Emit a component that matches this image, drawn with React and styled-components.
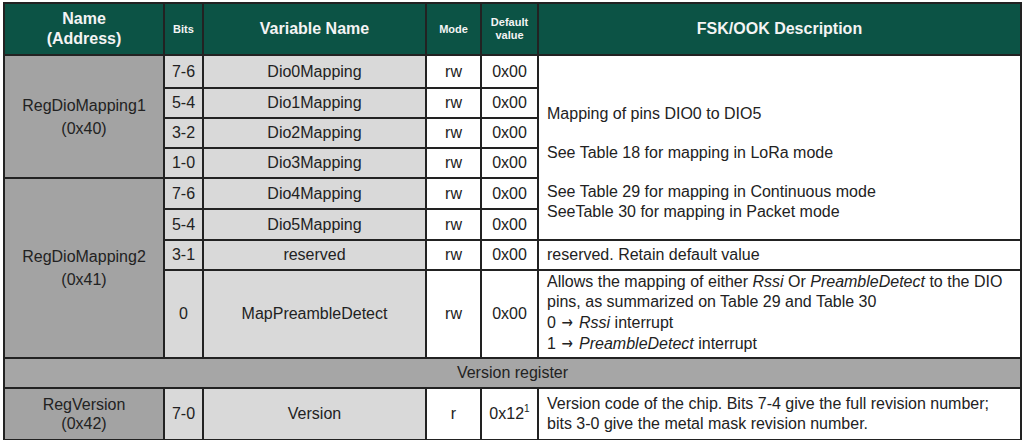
import React from "react";
import styled, { createGlobalStyle } from "styled-components";

const GlobalStyle = createGlobalStyle`
  body {
    margin: 0;
    background: #fff;
    font-family: "Liberation Sans", Arial, sans-serif;
    color: #222;
  }
`;

const Table = styled.table`
  margin: 2px 0 0 3px;
  width: 1017px;
  border-collapse: collapse;
  table-layout: fixed;
  font-size: 16px;
`;

const Col = styled.col`
  width: ${(p) => p.$w}px;
`;

const Row = styled.tr`
  height: ${(p) => p.$h}px;
`;

const Cell = styled.td`
  border: 2px solid #222;
  padding: 0;
  text-align: center;
  vertical-align: middle;
  line-height: 20px;
  background: #fff;
`;

const HeadCell = styled.th`
  border: 2px solid #222;
  padding: 0;
  background: #0c5345;
  color: #f4f4f4;
  font-weight: bold;
  font-size: ${(p) => (p.$small ? "11px" : "16px")};
  line-height: ${(p) => (p.$small ? "13px" : "20px")};
  text-align: center;
  vertical-align: middle;
`;

const NameCell = styled(Cell)`
  background: #a3a3a3;
  line-height: ${(p) => (p.$tight ? "19px" : "23px")};
`;

const BitsCell = styled(Cell)`
  background: #d9d9d9;
`;

const VarCell = styled(Cell)`
  background: #d9d9d9;
`;

const DescCell = styled(Cell)`
  text-align: left;
  padding: ${(p) => p.$pad || "0 8px"};
  vertical-align: ${(p) => p.$valign || "middle"};
  line-height: ${(p) => p.$lh || "20px"};
`;

const SectionCell = styled(Cell)`
  background: #a6a6a6;
`;

const Gap = styled.div`
  height: ${(p) => p.$h}px;
`;

const Arrow = styled.span`
  display: inline-block;
  font-family: "DejaVu Sans", sans-serif;
  font-size: 17px;
  line-height: 20px;
  transform: scaleX(0.8);
`;

const Sup = styled.sup`
  font-size: 10px;
  line-height: 0;
  vertical-align: 7px;
`;

const regs = [
  { bits: "7-6", name: "Dio0Mapping", h: 33 },
  { bits: "5-4", name: "Dio1Mapping", h: 30 },
  { bits: "3-2", name: "Dio2Mapping", h: 30 },
  { bits: "1-0", name: "Dio3Mapping", h: 30 },
];

export default function App() {
  return (
    <>
      <GlobalStyle />
      <Table>
        <colgroup>
          <Col $w={160} />
          <Col $w={39} />
          <Col $w={223} />
          <Col $w={55} />
          <Col $w={57} />
          <Col $w={483} />
        </colgroup>
        <tbody>
          <Row $h={52}>
            <HeadCell>
              Name
              <br />
              (Address)
            </HeadCell>
            <HeadCell $small>Bits</HeadCell>
            <HeadCell>Variable Name</HeadCell>
            <HeadCell $small>Mode</HeadCell>
            <HeadCell $small>
              Default
              <br />
              value
            </HeadCell>
            <HeadCell>FSK/OOK Description</HeadCell>
          </Row>

          {regs.map((r, i) => (
            <Row $h={r.h} key={r.name}>
              {i === 0 && (
                <NameCell rowSpan={4}>
                  RegDioMapping1
                  <br />
                  (0x40)
                </NameCell>
              )}
              <BitsCell>{r.bits}</BitsCell>
              <VarCell>{r.name}</VarCell>
              <Cell>rw</Cell>
              <Cell>0x00</Cell>
              {i === 0 && (
                <DescCell rowSpan={6} $valign="top" $pad="48px 8px 0" $lh="19.5px">
                  Mapping of pins DIO0 to DIO5
                  <Gap $h={19.5} />
                  See Table 18 for mapping in LoRa mode
                  <Gap $h={19.5} />
                  See Table 29 for mapping in Continuous mode
                  <br />
                  SeeTable 30 for mapping in Packet mode
                </DescCell>
              )}
            </Row>
          ))}

          <Row $h={31}>
            <NameCell rowSpan={4}>
              RegDioMapping2
              <br />
              (0x41)
            </NameCell>
            <BitsCell>7-6</BitsCell>
            <VarCell>Dio4Mapping</VarCell>
            <Cell>rw</Cell>
            <Cell>0x00</Cell>
          </Row>
          <Row $h={31}>
            <BitsCell>5-4</BitsCell>
            <VarCell>Dio5Mapping</VarCell>
            <Cell>rw</Cell>
            <Cell>0x00</Cell>
          </Row>
          <Row $h={30}>
            <BitsCell>3-1</BitsCell>
            <VarCell>reserved</VarCell>
            <Cell>rw</Cell>
            <Cell>0x00</Cell>
            <DescCell>reserved. Retain default value</DescCell>
          </Row>
          <Row $h={88}>
            <BitsCell>0</BitsCell>
            <VarCell>MapPreambleDetect</VarCell>
            <Cell>rw</Cell>
            <Cell>0x00</Cell>
            <DescCell $valign="top" $pad="1px 8px 0">
              Allows the mapping of either <i>Rssi</i> Or <i>PreambleDetect</i> to the DIO
              pins, as summarized on Table 29 and Table 30
              <br />0 <Arrow>→</Arrow> <i>Rssi</i> interrupt
              <br />1 <Arrow>→</Arrow> <i>PreambleDetect</i> interrupt
            </DescCell>
          </Row>

          <Row $h={30}>
            <SectionCell colSpan={6}>Version register</SectionCell>
          </Row>

          <Row $h={52}>
            <NameCell $tight>
              RegVersion
              <br />
              (0x42)
            </NameCell>
            <BitsCell>7-0</BitsCell>
            <VarCell>Version</VarCell>
            <Cell>r</Cell>
            <Cell>
              0x12<Sup>1</Sup>
            </Cell>
            <DescCell>
              Version code of the chip. Bits 7-4 give the full revision number;
              <br />
              bits 3-0 give the metal mask revision number.
            </DescCell>
          </Row>
        </tbody>
      </Table>
    </>
  );
}
